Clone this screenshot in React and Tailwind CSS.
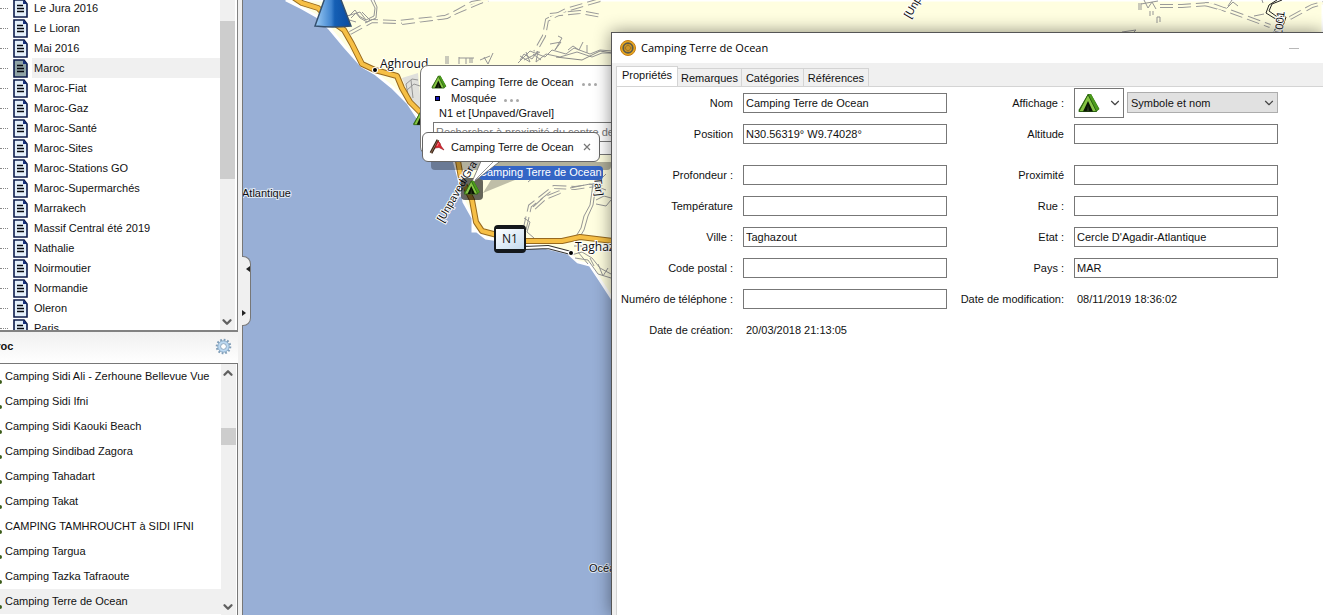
import React from 'react';
import { ChevronDown, ChevronUp } from 'lucide-react';

const LISTS = [
  'Le Jura 2016',
  'Le Lioran',
  'Mai 2016',
  'Maroc',
  'Maroc-Fiat',
  'Maroc-Gaz',
  'Maroc-Santé',
  'Maroc-Sites',
  'Maroc-Stations GO',
  'Maroc-Supermarchés',
  'Marrakech',
  'Massif Central été 2019',
  'Nathalie',
  'Noirmoutier',
  'Normandie',
  'Oleron',
  'Paris',
];

const WAYPOINTS = [
  'Camping Sidi Ali - Zerhoune Bellevue Vue',
  'Camping Sidi Ifni',
  'Camping Sidi Kaouki Beach',
  'Camping Sindibad Zagora',
  'Camping Tahadart',
  'Camping Takat',
  'CAMPING TAMHROUCHT à SIDI IFNI',
  'Camping Targua',
  'Camping Tazka Tafraoute',
  'Camping Terre de Ocean',
];

const LEFT_FIELDS = [
  { id: 'nom', label: 'Nom', value: 'Camping Terre de Ocean' },
  { id: 'position', label: 'Position', value: 'N30.56319° W9.74028°' },
  { id: 'profondeur', label: 'Profondeur :', value: '', gap: true },
  { id: 'temperature', label: 'Température', value: '' },
  { id: 'ville', label: 'Ville :', value: 'Taghazout' },
  { id: 'codepostal', label: 'Code postal :', value: '' },
  { id: 'telephone', label: 'Numéro de téléphone :', value: '' },
];

const RIGHT_FIELDS = [
  { id: 'altitude', label: 'Altitude', value: '' },
  { id: 'proximite', label: 'Proximité', value: '', gap: true },
  { id: 'rue', label: 'Rue :', value: '' },
  { id: 'etat', label: 'Etat :', value: "Cercle D'Agadir-Atlantique" },
  { id: 'pays', label: 'Pays :', value: 'MAR' },
];

// unpaved tracks, drawn twice to get the hollow dashes
const TRACKS = [
  'M350 33L372 21L398 22L445 17L485 0',
  'M402 23L447 17L472 3L488 0',
  'M600 0L566 10L547 20L544 36L535 52',
  'M550 15L580 12L602 16',
  'M602 184L575 188L554 187L530 206L524 232',
  'M560 192L545 198L532 210',
  'M1160 6L1182 6L1210 4L1232 12L1270 26',
  'M1290 18L1312 6L1323 3',
  'M1205 4L1226 10',
];

function DocIcon({ selected }) {
  return (
    <svg width="15" height="19" viewBox="0 0 15 19" className="shrink-0">
      <path d="M1 1H11L14 5V18H1Z" fill={selected ? '#8fa3a5' : '#e4f0fb'} stroke="#0b1a4a" strokeWidth="1.6" />
      <path d="M10 1V5H14Z" fill="#17307c" />
      <path d="M4 6.5H10M4 9.5H11M4 12.5H11" stroke="#05070f" strokeWidth="1.5" />
    </svg>
  );
}

function TentIcon({ className }) {
  return (
    <svg viewBox="0 0 22 20" className={className}>
      <path d="M10 1L13 1L21.5 16L18 19H1L0.5 17Z" fill="#2f6d12" />
      <path d="M10.5 1.5L13 1L21 16L18 18Z" fill="#4b9a1c" />
      <path d="M10 1.5L1 18.5H18.5Z" fill="#86c444" stroke="#2c6410" strokeWidth="1" />
      <path d="M10 8L5 18.5H15Z" fill="#0a1404" />
      <path d="M10 12L8.5 18.5H11.5Z" fill="#27331c" />
    </svg>
  );
}

function FlagIcon() {
  return (
    <svg width="16" height="16" viewBox="0 0 16 16" className="shrink-0">
      <path d="M9 1L2 14" stroke="#3b2519" strokeWidth="3" />
      <path d="M9 1L2 14" stroke="#8d6a4e" strokeWidth="1" />
      <path d="M9 2L6 9L10 8.5L15 11L12 7L11 4Z" fill="#e0242e" stroke="#8d1820" strokeWidth="0.6" />
      <path d="M9.5 4L8 7" stroke="#f0878c" />
    </svg>
  );
}

function GearIcon() {
  return (
    <svg width="17" height="17" viewBox="0 0 17 17">
      <circle cx="8.5" cy="8.5" r="6.6" fill="none" stroke="#7f9db8" strokeWidth="2.4" strokeDasharray="1.7 1.756" />
      <circle cx="8.5" cy="8.5" r="4.5" fill="none" stroke="#bcd9f2" strokeWidth="3" />
      <circle cx="8.5" cy="8.5" r="5.7" fill="none" stroke="#7f9db8" strokeWidth="0.8" />
      <circle cx="8.5" cy="8.5" r="2.9" fill="#fff" stroke="#7f9db8" strokeWidth="0.9" />
    </svg>
  );
}

function LogoIcon() {
  return (
    <svg width="16" height="16" viewBox="0 0 16 16">
      <circle cx="8" cy="8" r="7.5" fill="#e9a91f" stroke="#c47a12" />
      <circle cx="8" cy="8" r="4.8" fill="#d99c20" stroke="#5c5a4c" strokeWidth="1.7" />
      <path d="M8 4V12M4 8H12" stroke="#a87414" strokeWidth="0.7" />
      <circle cx="8" cy="8" r="2.6" fill="#cf962a" stroke="#8b6a26" strokeWidth="0.7" />
    </svg>
  );
}

function MapDrawing() {
  return (
    <svg width="1080" height="615" viewBox="243 0 1080 615" className="absolute left-0 top-0">
      <path
        d="M286 0L302 8L318 17L330 29L345 47L362 66L376 74L392 87L408 103L418 118L436 140L454 160L461 186L464 202L473 218V231L477 231L486 238L540 246L568 253L578 262L590 265L600 280L613 300V340H1323V0Z"
        fill="#fffee0"
        stroke="#fff"
        strokeWidth="3"
      />
      <path d="M402 78L418 73L422 120L412 102Z" fill="#e0e0dc" />

      {/* dirt tracks */}
      <g fill="none" stroke="#999" strokeWidth="4" strokeDasharray="13 5">
        {TRACKS.map((d) => (
          <path key={d} d={d} />
        ))}
      </g>
      <g fill="none" stroke="#fffee0" strokeWidth="2">
        {TRACKS.map((d) => (
          <path key={d} d={d} />
        ))}
      </g>

      {/* small lanes around the villages */}
      <g fill="none" stroke="#959595" strokeWidth="1">
        <path d="M349 16L355 10L359 16L366 20L374 16L375 8L371 0M351 18L356 13L360 18L367 22L376 18L377 7L374 0" />
        <path d="M347 16L360 12L366 20M362 12L370 20M346 19L356 22" />
        <path d="M518 63L530 51L545 57L552 50L566 54L574 48L590 54L600 50L612 51" />
        <path d="M520 60L524 54L532 59L538 51L536 62L546 54L560 57L577 52L592 57L602 53H612" />
        <path d="M520 56L530 62L526 52M533 54L541 60M524 60L540 52" />
        <path d="M550 44L561 42L555 50L562 38L558 36M568 50L573 46L579 50L583 42M587 45V53" />
        <path d="M446 56V64M448 56V64M459 57V64M459 58H474M466 58V64M470 58V63M472 58V63M484 57L488 64L493 53M480 60L490 56" />
        <path d="M406 84L412 79L418 80M407 90L414 84L420 86M406 84L409 100L416 106M411 80L413 98" />
        <path d="M596 184L593 205L588 216L584 230L578 240M593 184L590 205L584 216L581 228L575 238" />
        <path d="M570 188L590 184L606 190M596 200L604 196L611 198M596 204L606 206L611 200M588 176L600 180L606 174" />
        <path d="M571 255L582 252L592 258L600 268L611 274M575 258L588 260L598 274L611 278M578 252L588 264M590 258L594 266M598 264L603 276L608 268M574 246L586 246" />
        <path d="M524 218L530 222L527 232L534 238" />
        <path d="M522 175L530 173L526 180M535 176L528 182" />
        <path d="M1139 3V10M1141 3V10M1144 0L1148 8L1152 2L1156 9M1141 4L1158 1M1150 11V16M1153 11V15M1157 17V23M1160 17V22M1157 17H1160M1227 8L1233 2L1238 6M1232 0L1228 6M1262 0L1263 3M1254 16L1264 14" />
        <path d="M1122 32L1136 30L1134 32" />
      </g>
      <path d="M1282 0L1272 4L1269 11L1276 16L1286 17L1281 32M1277 0L1269 5L1266 13L1274 18L1279 20L1274 32" fill="none" stroke="#222" />
      <path d="M612 53L600 51L582 60L556 57" fill="none" stroke="#888" />

      {/* N1 main road */}
      <g fill="none" strokeLinejoin="round">
        <path d="M290 -5L302 3L318 8L330 20L344 30L352 44L362 64L375 70L397 76L402 88L410 102L424 116L446 140L457 155L461 178L472 200L476 222L482 231L520 241L562 241L580 237L613 241" stroke="#97691e" strokeWidth="6" />
        <path d="M290 -5L302 3L318 8L330 20L344 30L352 44L362 64L375 70L397 76L402 88L410 102L424 116L446 140L457 155L461 178L472 200L476 222L482 231L520 241L562 241L580 237L613 241" stroke="#f6bf45" strokeWidth="4" />
        <path d="M525 248L548 247L571 253" stroke="#333" strokeWidth="4" />
        <path d="M525 248L548 247L571 253" stroke="#fff" strokeWidth="2" />
      </g>
      <circle cx="375" cy="70" r="3" fill="#fff" />
      <circle cx="375" cy="70" r="2" fill="#000" />
      <circle cx="571" cy="253" r="3" fill="#fff" />
      <circle cx="571" cy="253" r="2" fill="#000" />

      {/* position marker */}
      <defs>
        <linearGradient id="cone" x1="0" x2="1">
          <stop offset="0" stopColor="#9fcdf5" />
          <stop offset="0.45" stopColor="#3f84cf" />
          <stop offset="0.55" stopColor="#155fb4" />
          <stop offset="1" stopColor="#0a4ba0" />
        </linearGradient>
      </defs>
      <path d="M327 -8H338L351 26Q333 28 315 26Z" fill="url(#cone)" stroke="#35506e" strokeWidth="1.5" />

      <g fontFamily="'Open Sans', sans-serif" fontSize="12" fill="#111" stroke="#fff" strokeWidth="2" paintOrder="stroke">
        <text x="380" y="68">Aghroud</text>
        <text x="575" y="251">Taghazout</text>
        <g fontFamily="'Liberation Sans', sans-serif" fontSize="11">
          <text x="242" y="197" stroke="#dfe7f4">Atlantique</text>
          <text x="589" y="572" stroke="#dfe7f4">Océan</text>
          <text transform="translate(443 223) rotate(-60)">[Unpaved/Gravel]</text>
          <text transform="translate(910 19) rotate(-60)">[Unpaved/Gravel]</text>
          <text transform="translate(594 178) rotate(84)">Tar]</text>
          <text transform="translate(1282 36) rotate(-84)">1001</text>
        </g>
      </g>
    </svg>
  );
}

function Dots() {
  return (
    <span className="flex gap-[3px] pt-1">
      <span className="size-[3px] rounded-full bg-[#a8a8a8]" />
      <span className="size-[3px] rounded-full bg-[#a8a8a8]" />
      <span className="size-[3px] rounded-full bg-[#a8a8a8]" />
    </span>
  );
}

function MapArea() {
  return (
    <main className="relative flex-1 bg-[#98afd6]">
      <MapDrawing />
      <TentIcon className="absolute left-[170px] top-[111px] h-[15px] w-4" />

      {/* collapse handle on the splitter */}
      <button
        aria-label="Réduire le panneau"
        className="absolute -left-px top-[256px] flex h-[70px] w-[9px] flex-col justify-between rounded-r-lg border border-l-0 border-[#777] bg-[#f0f0f0] py-[9px]"
      >
        <span className="border-y-3 border-r-4 border-y-transparent border-r-[#222]" />
        <span className="border-y-3 border-l-4 border-y-transparent border-l-[#222]" />
      </button>

      {/* N1 road shield */}
      <div className="absolute left-[251px] top-[225px] flex h-7 w-8 items-center justify-center rounded-sm border-x-2 border-y-4 border-[#14181c] bg-linear-to-br from-white to-[#c3daef] font-['Open_Sans',sans-serif] text-xs text-[#111]">
        N1
      </div>

      {/* selection popup */}
      <div className="absolute left-[177px] top-[65px] h-[90px] w-[220px] rounded-lg border border-[#777] bg-white pl-[10px] pt-2">
        <div className="flex h-4 items-center">
          <TentIcon className="h-[14px] w-4" />
          <span className="ml-1 pr-2">Camping Terre de Ocean</span>
          <Dots />
        </div>
        <div className="flex h-4 items-center">
          <span className="ml-1 mr-[11px] size-[5px] border border-black bg-[#1414b8]" />
          <span className="pr-2">Mosquée</span>
          <Dots />
        </div>
        <div className="pl-2 leading-[14px]">N1 et [Unpaved/Gravel]</div>
        <input
          aria-label="Rechercher à proximité"
          placeholder="Rechercher à proximité du centre de la carte"
          className="mt-[2px] ml-[2px] h-5 w-[200px] border border-[#777] bg-white px-[2px] placeholder:text-[#777]"
        />
      </div>

      {/* shadow and pointer of the callout */}
      <div className="absolute left-[188px] top-[162px] h-2 w-[180px] rounded-b bg-black/30" />
      <div className="absolute left-[218px] top-[178px] size-[22px] rounded-sm bg-black/60" />
      <div className="absolute left-[236px] top-[166px] h-[14px] whitespace-nowrap rounded-sm bg-[#3465c5] pr-px leading-[13px] text-white">
        Camping Terre de Ocean
      </div>
      <svg width="60" height="50" viewBox="0 0 60 50" className="absolute left-[220px] top-[155px]">
        <path d="M52 25L20 38L28 25Z" fill="#000" opacity="0.25" />
        <path d="M19 4L8 29L40 4Z" fill="#fff" stroke="#666" strokeWidth="0.8" />
        <path d="M31 6L12 25" stroke="#999" />
      </svg>
      <TentIcon className="absolute left-[220px] top-[180px] h-[15px] w-[18px]" />
      <div className="absolute left-[179px] top-[132px] flex h-[30px] w-[178px] items-center rounded-md border border-[#666] bg-white pl-[6px]">
        <FlagIcon />
        <span className="ml-[6px] flex-1">Camping Terre de Ocean</span>
        <button aria-label="Fermer" className="mr-2">
          <svg width="8" height="8" viewBox="0 0 8 8">
            <path d="M1 1L7 7M7 1L1 7" stroke="#777" strokeWidth="1.2" />
          </svg>
        </button>
      </div>
    </main>
  );
}

function Scrollbar({ thumb, up }) {
  return (
    <div className="flex w-[15px] shrink-0 flex-col justify-between bg-[#f0f0f0]">
      {up && <ChevronUp size={14} strokeWidth={4} color="#606060" className="mt-[2px]" />}
      <div className={thumb} />
      <ChevronDown size={14} strokeWidth={4} color="#606060" className="mb-px" />
    </div>
  );
}

function Sidebar() {
  return (
    <aside className="flex w-[243px] shrink-0 flex-col border-r border-[#777] bg-[#f0f0f0] pr-1">
      <div className="flex h-[332px] shrink-0 overflow-hidden border-b-2 border-r border-[#828282] bg-white">
        <ul className="-mt-[2px] flex-1">
          {LISTS.map((name) => (
            <li key={name} className="flex h-5 items-center">
              <span className="mr-[5px] w-2 border-t border-dotted border-[#888]" />
              <DocIcon selected={name === 'Maroc'} />
              <a
                href="#"
                className={
                  name === 'Maroc'
                    ? 'ml-1 flex h-full flex-1 items-center bg-[#f0f0f0] pl-[2px]'
                    : 'ml-1 flex h-full flex-1 items-center pl-[2px]'
                }
              >
                {name}
              </a>
            </li>
          ))}
        </ul>
        <Scrollbar thumb="mt-[21px] mb-auto h-[158px] bg-[#cdcdcd]" />
        <div className="w-[2px]" />
      </div>

      <div className="flex h-[31px] shrink-0 items-center justify-between bg-linear-to-b from-[#f0f0f0] to-white pb-[3px] pr-[6px]">
        <h2 className="-ml-[19px] font-bold">Maroc</h2>
        <button aria-label="Options">
          <GearIcon />
        </button>
      </div>

      <div className="flex flex-1 overflow-hidden border-r border-t border-[#777] bg-white">
        <ul className="flex-1">
          {WAYPOINTS.map((name) => (
            <li
              key={name}
              className={
                name === 'Camping Terre de Ocean'
                  ? 'flex h-[25px] items-center bg-[#f0f0f0] pb-[2px]'
                  : 'flex h-[25px] items-center pb-[2px]'
              }
            >
              <span className="mt-3 h-1 w-[2px] rounded-r-full bg-[#3b5d1a]" />
              <a href="#" className="whitespace-nowrap pl-[3px]">
                {name}
              </a>
            </li>
          ))}
        </ul>
        <Scrollbar up thumb="mt-12 mb-auto h-[17px] bg-[#cdcdcd]" />
        <div className="w-[1px]" />
      </div>
    </aside>
  );
}

function Field({ id, label, value, gap }) {
  return (
    <div className={gap ? 'mt-[10px] flex h-[31px] items-center' : 'flex h-[31px] items-center'}>
      <label htmlFor={id} className="w-28 shrink-0 whitespace-nowrap text-right">
        {label}
      </label>
      <input id={id} defaultValue={value} className="ml-[10px] h-5 w-[204px] border border-[#777] bg-white px-[2px]" />
    </div>
  );
}

function Dialog() {
  return (
    <section
      role="dialog"
      aria-label="Camping Terre de Ocean"
      className="absolute bottom-0 left-[611px] right-0 top-8 flex flex-col border-l border-t border-[#555] bg-[#f0f0f0] shadow-[0_0_16px_rgba(0,0,0,0.45)]"
    >
      <header className="flex h-[30px] shrink-0 items-center bg-white pl-2 font-['Open_Sans',sans-serif] text-[11px] text-black">
        <LogoIcon />
        <h1 className="ml-[5px] flex-1">Camping Terre de Ocean</h1>
        <button aria-label="Réduire" className="mr-6 h-px w-[10px] bg-[#b8b8b8]" />
      </header>
      <div role="tablist" className="flex h-[23px] shrink-0 items-end pl-1">
        <button role="tab" aria-selected="true" className="-mb-px h-[21px] w-[62px] border border-b-0 border-[#d4d4d4] bg-white pb-1">
          Propriétés
        </button>
        <button role="tab" className="h-[18px] w-16 border border-b-0 border-l-0 border-[#d4d4d4]">
          Remarques
        </button>
        <button role="tab" className="h-[18px] w-[62px] border border-b-0 border-l-0 border-[#d4d4d4]">
          Catégories
        </button>
        <button role="tab" className="h-[18px] w-[65px] border border-b-0 border-l-0 border-[#d4d4d4]">
          Références
        </button>
      </div>
      <div className="ml-1 flex flex-1 border-l border-t border-[#d4d4d4] bg-white">
        <div className="w-[331px] shrink-0 pl-1">
          {LEFT_FIELDS.map((f) => (
            <Field key={f.id} {...f} />
          ))}
          <div className="flex h-[31px] items-center">
            <span className="w-28 text-right">Date de création:</span>
            <span className="ml-[13px]">20/03/2018 21:13:05</span>
          </div>
        </div>
        <div className="shrink-0 pl-1">
          <div className="flex h-[31px] items-center">
            <label htmlFor="affichage" className="w-28 text-right">
              Affichage :
            </label>
            <button
              aria-label="Symbole"
              className="ml-[10px] flex h-[30px] w-[50px] items-center justify-between border border-[#777] bg-white pl-[3px] pr-px"
            >
              <TentIcon className="h-5 w-[22px]" />
              <ChevronDown size={14} strokeWidth={2} color="#444" />
            </button>
            <div className="relative ml-[3px]">
              <select id="affichage" className="h-[21px] w-[151px] appearance-none border border-[#adadad] bg-[#e1e1e1] pl-[3px]">
                <option>Symbole et nom</option>
              </select>
              <ChevronDown size={14} strokeWidth={2} color="#444" className="pointer-events-none absolute right-[2px] top-1" />
            </div>
          </div>
          {RIGHT_FIELDS.map((f) => (
            <Field key={f.id} {...f} />
          ))}
          <div className="flex h-[31px] items-center">
            <span className="w-28 text-right">Date de modification:</span>
            <span className="ml-[13px]">08/11/2019 18:36:02</span>
          </div>
        </div>
      </div>
    </section>
  );
}

export default function App() {
  return (
    <div className="relative flex h-screen overflow-hidden bg-white font-['Liberation_Sans',Arial,sans-serif] text-[11px] leading-4 text-[#111]">
      <Sidebar />
      <MapArea />
      <Dialog />
    </div>
  );
}
